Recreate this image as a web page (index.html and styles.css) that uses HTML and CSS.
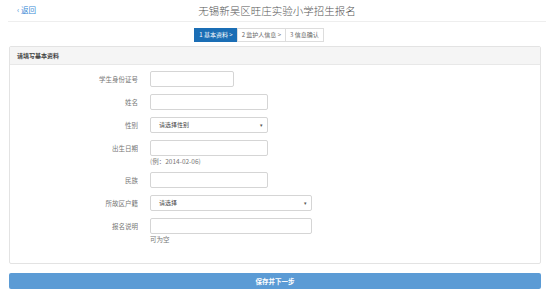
FILE: index.html
```html
<!DOCTYPE html>
<html lang="zh-CN">
<head>
  <meta charset="UTF-8">
  <title>无锡新吴区旺庄实验小学招生报名</title>
  <link rel="stylesheet" href="styles.css">
</head>
<body>
  <div class="top-bar">
    <a class="back" href="#">&lsaquo; 返回</a>
    <h1 class="title">无锡新吴区旺庄实验小学招生报名</h1>
  </div>

  <div class="steps">
    <span class="step active">1 基本资料 &gt;</span>
    <span class="step">2 监护人信息 &gt;</span>
    <span class="step">3 信息确认</span>
  </div>

  <div class="panel">
    <div class="panel-heading">请填写基本资料</div>
    <div class="panel-body">
      <div class="form-row">
        <label>学生身份证号</label>
        <div class="field"><input type="text" class="input-sm"></div>
      </div>
      <div class="form-row">
        <label>姓名</label>
        <div class="field"><input type="text" class="input-md"></div>
      </div>
      <div class="form-row">
        <label>性别</label>
        <div class="field">
          <div class="select input-md">请选择性别<span class="caret">&#9662;</span></div>
        </div>
      </div>
      <div class="form-row">
        <label>出生日期</label>
        <div class="field">
          <input type="text" class="input-md">
          <div class="hint">(例：2014-02-06)</div>
        </div>
      </div>
      <div class="form-row">
        <label>民族</label>
        <div class="field"><input type="text" class="input-md"></div>
      </div>
      <div class="form-row">
        <label>所故区户籍</label>
        <div class="field">
          <div class="select input-lg">请选择<span class="caret">&#9662;</span></div>
        </div>
      </div>
      <div class="form-row">
        <label>报名说明</label>
        <div class="field">
          <input type="text" class="input-lg">
          <div class="hint">可为空</div>
        </div>
      </div>
    </div>
  </div>

  <button type="button" class="btn-next">保存并下一步</button>
</body>
</html>
```

FILE: styles.css
```css
body {
  margin: 0;
  font-family: "Noto Sans CJK SC", "Noto Sans", sans-serif;
  color: #555;
  background: #fff;
}

.top-bar {
  position: relative;
  height: 21px;
  margin: 0 8px;
  border-bottom: 1px solid #eee;
  display: flex;
  align-items: center;
  justify-content: center;
}

.back {
  position: absolute;
  left: 9px;
  top: 4px;
  font-size: 7.5px;
  color: #3a8ad6;
  text-decoration: none;
}

.title {
  margin: 0;
  font-size: 10.5px;
  font-weight: 300;
  color: #555;
  line-height: 21px;
}

.steps {
  display: flex;
  justify-content: center;
  margin-top: 6px;
  padding-right: 35px;
}

.step {
  font-size: 6px;
  line-height: 12px;
  padding: 0 4px;
  border: 1px solid #ddd;
  margin-left: -1px;
  color: #666;
  background: #fff;
}

.step.active {
  background: #1b6eb5;
  border-color: #1b6eb5;
  color: #fff;
}

.panel {
  margin: 4px 13px 0 9px;
  border: 1px solid #e3e3e3;
  border-radius: 2px;
}

.panel-heading {
  height: 17px;
  line-height: 17px;
  padding-left: 7px;
  background: #f5f5f5;
  border-bottom: 1px solid #e8e8e8;
  font-size: 6px;
  font-weight: bold;
  color: #444;
}

.panel-body {
  padding: 6px 0 20px;
  display: flex;
  flex-direction: column;
  gap: 7px;
}

.form-row {
  display: grid;
  grid-template-columns: 128px 1fr;
  column-gap: 12px;
  align-items: start;
}

.form-row label {
  height: 16px;
  overflow: hidden;
  text-align: right;
  font-size: 6.5px;
  line-height: 16px;
  color: #777;
}

.field input,
.select {
  box-sizing: border-box;
  display: block;
  height: 16px;
  margin: 0;
  border: 1px solid #d5d5d5;
  border-radius: 2px;
  background: #fff;
}

.input-sm { width: 84px; }
.input-md { width: 118px; }
.input-lg { width: 162px; }

.select {
  position: relative;
  font-size: 6px;
  line-height: 14px;
  padding-left: 8px;
  color: #444;
}

.caret {
  position: absolute;
  right: 4px;
  top: 0;
  font-size: 5px;
  color: #555;
}

.hint {
  height: 9px;
  font-size: 6.5px;
  line-height: 10px;
  color: #777;
}

.btn-next {
  display: block;
  box-sizing: border-box;
  width: 532px;
  height: 16px;
  margin: 9px 0 0 9px;
  padding: 0;
  border: 0;
  border-radius: 2px;
  background: #5b9bd5;
  color: #fff;
  font-family: inherit;
  font-size: 6.5px;
  font-weight: bold;
}
```
